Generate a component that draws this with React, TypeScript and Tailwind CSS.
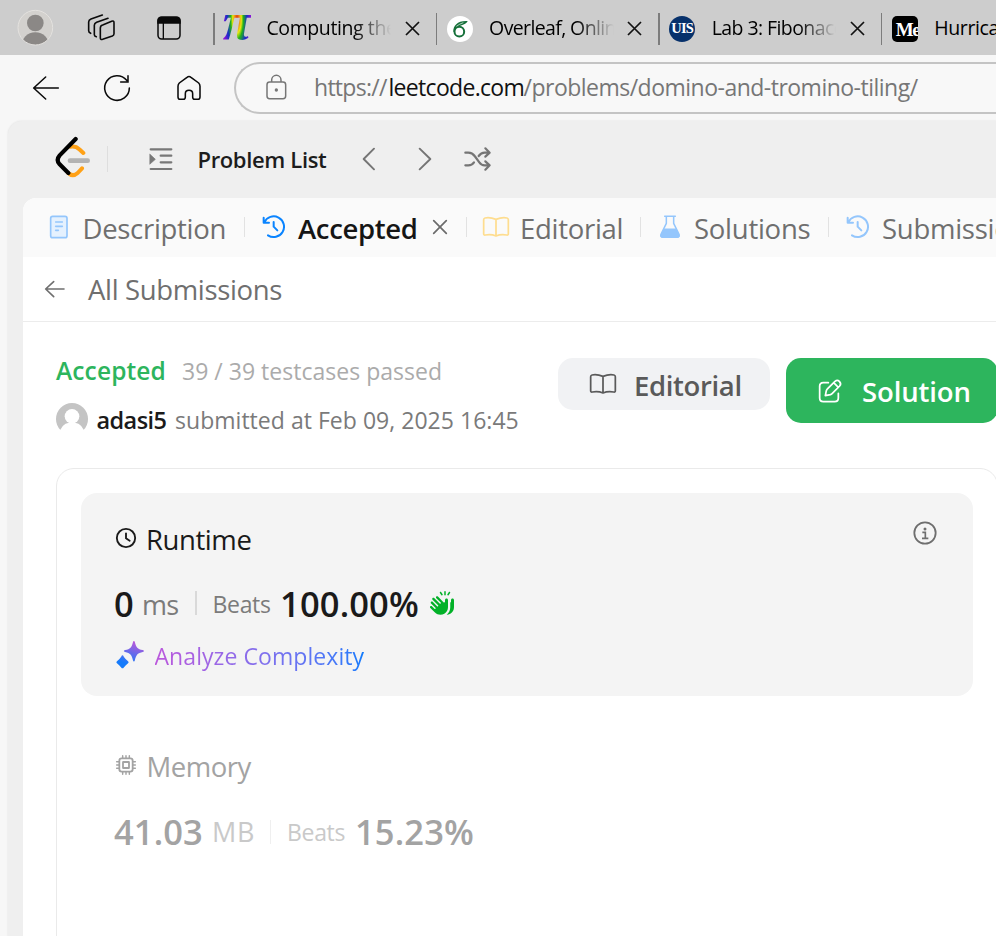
import React from "react";
import { FaHandsClapping } from "react-icons/fa6";

type IconProps = { className?: string };

function CloseIcon() {
  return (
    <svg className="h-[15px] w-[15px] shrink-0" viewBox="0 0 15 15" fill="none" stroke="#111" strokeWidth="1.7">
      <path d="M1 1 14 14M14 1 1 14" />
    </svg>
  );
}

function HistoryIcon({ className = "" }: IconProps) {
  return (
    <svg className={`h-6 w-6 shrink-0 ${className}`} viewBox="786 285 72 72" fill="none" stroke="currentColor" strokeWidth="6" strokeLinecap="round" strokeLinejoin="round">
      <path d="M791 293V308H807M793 307A31 31 0 1 1 804 346" />
      <path d="M821 306V320L832 331" />
    </svg>
  );
}

function BookIcon({ className = "" }: IconProps) {
  return (
    <svg className={`h-[22px] w-7 shrink-0 ${className}`} viewBox="450 288 84 66" fill="none" stroke="currentColor" strokeWidth="5.2" strokeLinejoin="round">
      <path d="M492 298Q474 291 459 294Q455 295 455 299V341Q455 346 460 345Q478 342 492 348Q506 342 524 345Q529 346 529 341V299Q529 295 525 294Q510 291 492 298V348" />
    </svg>
  );
}

function BrowserTab({ icon, title, spacing, close = true }: { icon: React.ReactNode; title: string; spacing: string; close?: boolean }) {
  return (
    <div className="flex h-full w-[222.6px] shrink-0 items-center pt-[2px]">
      <div className="h-8 w-[1.5px] shrink-0 bg-[#7c7c7c]" />
      <div className="ml-[9.5px] flex h-[26px] w-[26px] shrink-0 items-center justify-center">{icon}</div>
      <div
        className={`ml-[16.5px] w-[124.5px] shrink-0 overflow-hidden pb-[2px] text-[19.5px] leading-[30px] whitespace-nowrap ${spacing} ${
          close ? "[mask-image:linear-gradient(to_right,black_70%,transparent_100%)]" : ""
        }`}
      >
        {title}
      </div>
      {close && <div className="ml-[13.5px]"><CloseIcon /></div>}
    </div>
  );
}

function BrowserTabs() {
  return (
    <div className="flex h-[55px] items-center bg-[#cdcdcd]">
      <svg className="ml-[17px] h-[37px] w-[37px] shrink-0" viewBox="51 27 111 111">
        <defs>
          <clipPath id="profile"><circle cx="106" cy="83" r="52" /></clipPath>
        </defs>
        <circle cx="106" cy="83" r="52" fill="#d3d1ce" />
        <g clipPath="url(#profile)" fill="#8b8886">
          <circle cx="106" cy="69" r="25" />
          <ellipse cx="106" cy="140" rx="43" ry="43" />
        </g>
        <circle cx="106" cy="83" r="52" fill="none" stroke="#e4e2df" strokeWidth="3" />
      </svg>
      <svg className="mb-[1px] ml-[32px] h-7 w-[30px] shrink-0" viewBox="258 39 90 84" fill="none" stroke="#0a0a0a" strokeWidth="4.8" strokeLinecap="round">
        <path d="M308 75L335 64Q342 61 342 68V101Q342 106 337 108L308 118Q301 120 301 114V84Q301 77 308 75Z" />
        <path d="M324 55L290 67Q283 70 283 76V104Q283 108 289 110" />
        <path d="M307 45L273 57Q266 60 266 66V92Q266 97 272 100" />
      </svg>
      <svg className="ml-[40px] h-[26px] w-[26px] shrink-0" viewBox="468 44 78 78" fill="none" stroke="#0a0a0a" strokeWidth="4.5">
        <rect x="474" y="51" width="66" height="65" rx="11" />
        <path d="M474 68V61Q474 51 485 51H529Q540 51 540 61V68Z" fill="#0a0a0a" />
        <path d="M490 66V116" strokeWidth="4" />
      </svg>
      <div className="ml-[31px] flex h-full min-w-0 flex-1 overflow-hidden">
        <BrowserTab
          title="Computing the value"
          spacing="tracking-[-0.41px]"
          icon={
            <span className="bg-[radial-gradient(ellipse_at_50%_36%,#dd1c10_0%,#ef9f12_14%,#e7e711_22%,#21b21a_32%,#1530c8_50%,#8c10d8_70%)] bg-clip-text pb-[14px] font-['Liberation_Serif',serif] text-[52px] leading-[54px] font-bold text-transparent italic">
              π
            </span>
          }
        />
        <BrowserTab
          title="Overleaf, Online LaTeX"
          spacing="tracking-[-0.62px]"
          icon={
            <svg className="h-[26px] w-[26px]" viewBox="345 45 78 78">
              <circle cx="384" cy="84" r="39" fill="#fff" />
              <circle cx="382" cy="92" r="14.5" fill="none" stroke="#16703a" strokeWidth="6" />
              <path d="M364 92C363 73 378 58 407 60C402 70 392 72 382 75C372 78 368 84 368 93Z" fill="#16703a" />
              <path d="M373 76Q384 68 394 65" stroke="#fff" strokeWidth="2" fill="none" />
            </svg>
          }
        />
        <BrowserTab
          title="Lab 3: Fibonacci"
          spacing="tracking-[-0.58px]"
          icon={
            <span className="flex h-[26px] w-[26px] items-center justify-center rounded-full bg-[#07316b] font-['Liberation_Serif',serif] text-[14.5px] leading-none font-bold tracking-[-0.7px] text-white">
              UIS
            </span>
          }
        />
        <BrowserTab
          title="Hurricane"
          spacing="tracking-[-0.4px]"
          close={false}
          icon={
            <span className="h-[26px] w-[26px] overflow-hidden rounded-[5px] bg-black pl-[4px] font-['Liberation_Serif',serif] text-[19px] leading-[27px] font-bold tracking-[-1.5px] whitespace-nowrap text-white">
              Me
            </span>
          }
        />
      </div>
    </div>
  );
}

function AddressBar() {
  return (
    <div className="flex h-[66px] items-center bg-[#f7f7f7] pb-[1px]">
      <svg className="ml-[31px] h-[26px] w-[30px] shrink-0" viewBox="93 223 90 78" fill="none" stroke="#0a0a0a" strokeWidth="4.6" strokeLinecap="round" strokeLinejoin="round">
        <path d="M175 262H102M137 229L101 262L137 295" />
      </svg>
      <svg className="mt-[1px] ml-[41px] h-[30px] w-[30px] shrink-0" viewBox="306 219 90 90" fill="none" stroke="#0a0a0a" strokeWidth="4.6" strokeLinecap="round">
        <path d="M388 264A37 37 0 1 1 380 241M384 227V246H362" />
      </svg>
      <svg className="ml-[43px] h-[28px] w-[28px] shrink-0" viewBox="525 220 84 84" fill="none" stroke="#0a0a0a" strokeWidth="4.6">
        <path d="M534 289V257Q534 251 538 247L561 230Q567 225 573 230L596 247Q600 251 600 257V289Q600 296 594 296H584Q578 296 578 289V279Q578 269 567 269Q556 269 556 279V289Q556 296 550 296H540Q534 296 534 289Z" />
      </svg>
      <div className="ml-[31px] flex h-[52px] min-w-0 flex-1 items-center overflow-hidden rounded-l-full border-2 border-r-0 border-[#c4c4c4] bg-[#f8f8f8] text-[23px] whitespace-nowrap text-[#767676]">
        <svg className="mb-[1px] ml-[28px] h-[26px] w-[24px] shrink-0" viewBox="791 223 72 78" fill="none" stroke="#767676" strokeWidth="4.5">
          <rect x="800" y="247" width="56" height="50" rx="8" />
          <path d="M814 247V241A14 14 0 0 1 842 241V247" />
          <circle cx="828" cy="271" r="5" fill="#767676" stroke="none" />
        </svg>
        <div className="ml-[26px] flex">
          <span className="w-[74.5px] tracking-[-0.72px]">https://</span>
          <span className="w-[135px] tracking-[-0.69px] text-[#111]">leetcode.com</span>
          <span className="tracking-[-0.51px]">/problems/domino-and-tromino-tiling/</span>
        </div>
      </div>
    </div>
  );
}

function SiteHeader() {
  return (
    <div className="flex h-[77px] items-center pb-[1px] text-[#757575]">
      <svg className="mb-[5px] ml-[47px] h-[42px] w-9 shrink-0" viewBox="165 48 108 126" fill="none" strokeLinecap="round" strokeLinejoin="round">
        <path d="M211 80Q227 77 238 88L250 99M205 159Q218 172 233 159L246 145" stroke="#ffa116" strokeWidth="12" />
        <path d="M210 122H263" stroke="#b3b3b3" strokeWidth="14" />
        <path d="M227 57L179 106Q167 120 179 133L205 159" stroke="#000" strokeWidth="12.5" />
      </svg>
      <div className="ml-[16px] h-[26px] w-px bg-[#dedede]" />
      <svg className="mb-[1px] ml-[41px] h-6 w-6 shrink-0" viewBox="447 81 72 72" stroke="#787878" strokeWidth="6.5" strokeLinecap="round">
        <path d="M452 88H514M482 107H514M482 127H514M452 147H514" />
        <path d="M450 103L466 118L450 132Z" fill="#787878" strokeWidth="2" />
      </svg>
      <div className="mt-[1px] ml-[24.5px] w-[130.5px] text-[22px] font-semibold tracking-[-0.36px] whitespace-nowrap text-[#1c1c1c]">Problem List</div>
      <svg className="mb-[1px] ml-[32px] h-6 w-[18px] shrink-0" viewBox="83 82 54 72" fill="none" stroke="currentColor" strokeWidth="5.8" strokeLinecap="round" strokeLinejoin="round">
        <path d="M125 87L94 118L125 149" />
      </svg>
      <svg className="mb-[1px] ml-[38px] h-6 w-[18px] shrink-0" viewBox="251 82 54 72" fill="none" stroke="currentColor" strokeWidth="5.8" strokeLinecap="round" strokeLinejoin="round">
        <path d="M262 87L294 118L262 149" />
      </svg>
      <svg className="mb-[1px] ml-[29px] h-[26px] w-[30px] shrink-0" viewBox="391 78 90 78" fill="none" stroke="currentColor" strokeWidth="6.6" strokeLinecap="round" strokeLinejoin="round">
        <path d="M398 98H407Q419 98 426 108L440 127Q446 136 456 136H470M398 136H407Q418 136 424 127M438 108Q445 98 456 98H470M458 85L471 98L458 110M458 124L471 136L458 149" />
      </svg>
    </div>
  );
}

function Divider() {
  return <div className="mt-[-1px] h-5 w-[1.5px] shrink-0 bg-[#e2e2e2]" />;
}

function PanelTabs() {
  return (
    <div className="flex h-[59px] items-center overflow-hidden rounded-tl-[13px] bg-[#fafafa] text-[27.5px] whitespace-nowrap text-[#6f6f6f]">
      <svg className="mb-[1px] ml-[26px] h-6 w-5 shrink-0" viewBox="147 286 60 72" fill="none" stroke="#94c6fc" strokeWidth="5" strokeLinecap="round">
        <rect x="152" y="290" width="49" height="64" rx="6" fill="#e5f1fe" />
        <path d="M167 307H187M167 320H187M167 332H175" />
      </svg>
      <span className="mt-[3px] ml-[13.5px] w-[161px] shrink-0 tracking-[-0.3px]">Description</span>
      <Divider />
      <HistoryIcon className="mb-[1px] ml-[17px] text-[#0a84ff]" />
      <span className="mt-[3px] ml-[12px] w-[134px] shrink-0 font-semibold tracking-[-0.35px] text-[#151515]">Accepted</span>
      <svg className="mb-[1px] h-4 w-4 shrink-0" viewBox="0 0 16 16" stroke="#6b6b6b" strokeWidth="1.7" strokeLinecap="round">
        <path d="M1.7 1.7 14.3 14.3M14.3 1.7 1.7 14.3" />
      </svg>
      <div className="ml-[17.5px]"><Divider /></div>
      <BookIcon className="mb-[1px] ml-[15px] text-[#fedd8f]" />
      <span className="mt-[3px] ml-[10px] w-[119.5px] shrink-0 tracking-[-0.29px]">Editorial</span>
      <Divider />
      <svg className="mb-[1px] ml-[18px] h-6 w-[22px] shrink-0" viewBox="-15 286 66 72" fill="none" stroke="#94c6fc" strokeWidth="4.6" strokeLinecap="round" strokeLinejoin="round">
        <path d="M2 290H34M7 291V311L-8 342Q-13 353 -2 353H38Q49 353 44 342L29 311V291" />
        <path d="M0 329H36L45 346Q46 353 38 353H-2Q-10 353 -9 346Z" fill="#94c6fc" />
      </svg>
      <span className="mt-[3px] ml-[13px] w-[133.5px] shrink-0 tracking-[-0.26px]">Solutions</span>
      <Divider />
      <HistoryIcon className="mb-[1px] ml-[17px] text-[#94c6fc]" />
      <span className="mt-[3px] ml-[12px] shrink-0 tracking-[-0.26px]">Submissions</span>
    </div>
  );
}

function ResultHeader() {
  return (
    <div className="flex h-[146px] pt-[36px] pl-[33px] whitespace-nowrap">
      <div className="w-[502px] shrink-0 text-[23px]">
        <div className="flex h-[27px] items-center">
          <span className="w-[126px] text-[24.5px] font-semibold tracking-[0.12px] text-[#2db55d]">Accepted</span>
          <span className="tracking-[0.02px] text-[#ababab]">39 / 39 testcases passed</span>
        </div>
        <div className="mt-[18px] flex h-8 items-center">
          <svg className="h-8 w-8 shrink-0" viewBox="168 189 96 96">
            <circle cx="216" cy="237" r="48" fill="#c4c4c4" />
            <circle cx="216" cy="229" r="22" fill="#fff" />
            <path d="M174 290Q183 250 207 248H225Q249 250 258 290Z" fill="#fff" />
          </svg>
          <span className="mt-[3px] ml-[8.5px] w-[78.5px] text-[23.5px] font-semibold tracking-[-0.58px] text-[#1a1a1a]">adasi5</span>
          <span className="mt-[2px] tracking-[0.03px] text-[#7a7a7a]">submitted at Feb 09, 2025 16:45</span>
        </div>
      </div>
      <div className="flex shrink-0 items-start gap-4 text-[27.5px] font-semibold">
        <button className="flex h-[52px] w-[212px] items-center rounded-[15px] bg-[#f1f2f4] pl-[31px] text-[#5a5a5a]">
          <BookIcon />
          <span className="mt-[3px] ml-[17px] font-semibold tracking-[-0.36px]">Editorial</span>
        </button>
        <button className="flex h-[65px] w-[212px] items-center rounded-[15px] bg-[#2db55d] pl-[31px] text-white">
          <svg className="h-[26px] w-[26px] shrink-0" viewBox="831 115 78 78" fill="none" stroke="currentColor" strokeWidth="5.2" strokeLinecap="round" strokeLinejoin="round">
            <path d="M865 129H850Q839 129 839 140V175Q839 186 850 186H884Q895 186 895 175V161" />
            <path d="M856 168L859 153Q860 150 863 147L885 125Q892 119 898 125Q905 132 899 139L877 161Q874 164 871 165ZM881 129L895 143" />
          </svg>
          <span className="mt-[2px] ml-[19px] tracking-[-0.12px]">Solution</span>
        </button>
      </div>
    </div>
  );
}

function RuntimeCard() {
  return (
    <div className="h-[203px] w-[892px] rounded-2xl bg-[#f4f4f4] pr-[36px] pl-[33px] text-[#1a1a1a]">
      <div className="flex h-[80px] items-start justify-between pt-[28px]">
        <div className="flex h-9 items-center">
          <svg className="mb-[2px] ml-[1px] h-[22px] w-[22px] shrink-0" viewBox="345 561 66 66" fill="none" stroke="currentColor" strokeWidth="5.6" strokeLinecap="round">
            <circle cx="378" cy="594" r="27.5" />
            <path d="M378 580V595L389 602" />
          </svg>
          <span className="mt-[2px] ml-[9px] text-[27.5px] tracking-[-0.42px]">Runtime</span>
        </div>
        <svg className="h-6 w-6" viewBox="1119 543 72 72" fill="none" stroke="#6e6e6e" strokeWidth="5.4">
          <circle cx="1155" cy="579" r="32" />
          <path d="M1147 577H1156V594M1146 595H1165" strokeWidth="5" />
          <circle cx="1155" cy="567" r="4.5" fill="#6e6e6e" stroke="none" />
        </svg>
      </div>
      <div className="flex h-[60px] items-center">
        <span className="mt-[1px] w-[28px] text-[34.5px] font-semibold">0</span>
        <span className="mt-[5px] w-[53px] text-[27px] tracking-[-0.7px] text-[#7b7b7b]">ms</span>
        <div className="h-6 w-[1.5px] bg-[#d9d9d9]" />
        <span className="mt-[2px] ml-[16px] w-[67.5px] text-[23px] tracking-[-0.31px] text-[#7b7b7b]">Beats</span>
        <span className="mt-[2px] text-[34.5px] font-semibold tracking-[0.15px]">100.00%</span>
        <FaHandsClapping className="ml-[11px] h-[24px] w-[24px] text-[#02b128]" />
      </div>
      <div className="flex h-[46px] items-center">
        <svg className="mb-[2px] ml-[1px] h-[30px] w-[30px] shrink-0" viewBox="104 210 92 92">
          <defs>
            <linearGradient id="spark" gradientUnits="userSpaceOnUse" x1="168" y1="214" x2="146" y2="284">
              <stop stopColor="#bf56d8" />
              <stop offset="1" stopColor="#157bfb" />
            </linearGradient>
          </defs>
          <path fill="url(#spark)" d="M162 213Q164 213 165 217C169 233 173 238 189 241Q193 242 193 244Q193 246 189 247C174 250 169 255 165 272Q164 276 162 276Q160 276 159 272C155 256 151 250 135 247Q131 246 131 244Q131 242 135 241C151 238 155 233 159 217Q160 213 162 213ZM127 257Q129 257 131 261Q137 270 144 275Q148 278 144 281Q137 286 131 294Q127 300 123 294Q117 286 110 281Q106 278 110 275Q117 270 123 261Q125 257 127 257Z" />
        </svg>
        <span className="mt-[1px] ml-[9.5px] bg-linear-to-r from-[#bb57dc] to-[#0d7bfc] bg-clip-text text-[23px] tracking-[0.07px] whitespace-nowrap text-transparent">Analyze Complexity</span>
      </div>
    </div>
  );
}

function MemoryCard() {
  return (
    <div className="mt-[24px] pl-[33px] text-[#a3a3a3]">
      <div className="flex h-[92px] items-center">
        <svg className="mb-[3px] h-[24px] w-[24px] shrink-0" viewBox="102 69 72 72" fill="none" stroke="currentColor" strokeWidth="5.4" strokeLinecap="round">
          <rect x="118" y="85" width="40" height="40" rx="7" />
          <rect x="129" y="96" width="18" height="18" rx="1" />
          <path d="M128 77V84M138 77V84M148 77V84M128 126V133M138 126V133M148 126V133M110 95H117M110 105H117M110 115H117M159 95H166M159 105H166M159 115H166" strokeWidth="4.4" />
        </svg>
        <span className="mt-[2px] ml-[8.5px] text-[27.5px] tracking-[-0.48px]">Memory</span>
      </div>
      <div className="flex h-[39px] items-center">
        <span className="w-[98px] text-[34.5px] font-semibold tracking-[0.09px]">41.03</span>
        <span className="mt-[1px] w-[58px] text-[27px] tracking-[0.8px] text-[#c9c9c9]">MB</span>
        <div className="h-6 w-px bg-[#efefef]" />
        <span className="mt-[1px] ml-[16px] w-[68px] text-[23px] tracking-[-0.31px] text-[#c9c9c9]">Beats</span>
        <span className="text-[34.5px] font-semibold tracking-[0.13px]">15.23%</span>
      </div>
    </div>
  );
}

export default function App() {
  return (
    <div className="flex h-[936px] w-[996px] flex-col overflow-hidden bg-[#f7f7f7] font-['Open_Sans',sans-serif] text-black">
      <BrowserTabs />
      <AddressBar />
      <div className="ml-[8px] flex min-h-0 flex-1 flex-col rounded-tl-[14px] bg-[#efefef] shadow-[0_0_2px_#dcdcdc]">
        <SiteHeader />
        <div className="ml-[15px] min-h-0 flex-1 overflow-hidden rounded-tl-[13px] bg-white">
          <PanelTabs />
          <div className="flex h-[65px] items-center border-b border-[#ececec] pl-[21px] text-[27.5px] text-[#6f6f6f]">
            <svg className="h-[20px] w-[22px] shrink-0" viewBox="133 477 66 60" fill="none" stroke="currentColor" strokeWidth="5" strokeLinecap="round" strokeLinejoin="round">
              <path d="M138 507H193M162 485L138 507L162 530" />
            </svg>
            <span className="mt-[2px] ml-[22px] tracking-[-0.35px]">All Submissions</span>
          </div>
          <ResultHeader />
          <div className="ml-[33px] h-[500px] w-[942px] rounded-[18px] border border-[#eaeaea] pt-[24px] pl-[24px]">
            <RuntimeCard />
            <MemoryCard />
          </div>
        </div>
      </div>
    </div>
  );
}
